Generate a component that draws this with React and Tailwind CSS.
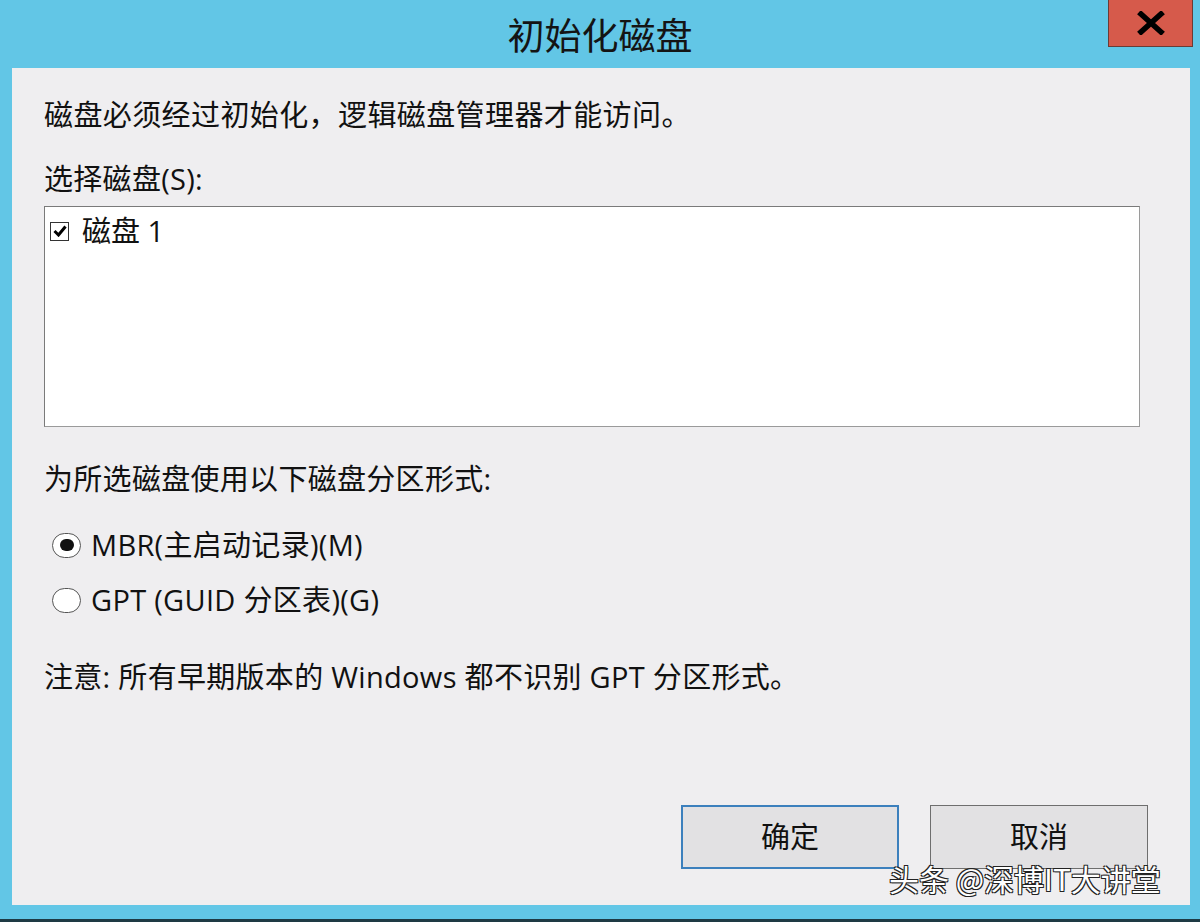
import React from "react";

const font = { fontFamily: '"Open Sans", "Noto Sans CJK SC", "Noto Sans", sans-serif' };

const Radio = ({ checked, label }) => (
  <div className="flex items-center h-[40px]">
    <span className="w-[29px] h-[25px] ml-[8px] rounded-full border border-[#555] bg-white flex items-center justify-center">
      {checked && <span className="w-[14px] h-[12px] rounded-full bg-[#111]" />}
    </span>
    <span className="ml-[10px] text-[29px] tracking-[0.3px] text-[#111]">{label}</span>
  </div>
);

const App = () => {
  return (
    <div className="w-[1200px] h-[922px] bg-[#62c6e6] flex flex-col overflow-hidden" style={font}>
      {/* title bar */}
      <div className="relative h-[68px] flex items-center justify-center shrink-0">
        <span className="text-[37px] text-[#141414] leading-none" style={{ fontFamily: '"Noto Sans CJK SC", sans-serif' }}>初始化磁盘</span>
        <button className="absolute right-[7px] top-0 w-[85px] h-[47px] bg-[#d65a4b] border border-[#6b3b35] border-t-0 flex items-center justify-center">
          <svg width="28" height="24" viewBox="0 0 28 24">
            <path d="M4 3 L24 21 M24 3 L4 21" stroke="#000" strokeWidth="5.5" strokeLinecap="square" />
          </svg>
        </button>
      </div>

      {/* body */}
      <div className="relative ml-[12px] mr-[10px] h-[837px] bg-[#efeef0] flex flex-col pl-[32px] pr-[50px] pt-[29px] shrink-0 text-[#111]">
        <p className="text-[29px] leading-[36px] tracking-[0.4px]">磁盘必须经过初始化，逻辑磁盘管理器才能访问。</p>
        <p className="mt-[28px] text-[29px] leading-[36px] tracking-[0.3px]">选择磁盘(S):</p>

        <div className="mt-[9px] h-[221px] bg-white border border-[#7a7a7a] border-r-[#9a9a9a] border-b-[#9a9a9a] pt-[12px] pl-[5px]">
          <div className="flex items-center h-[24px]">
            <span className="w-[19px] h-[19px] border border-[#333] bg-white flex items-center justify-center">
              <svg width="14" height="12" viewBox="0 0 14 12">
                <path d="M1.5 6 L5.5 10 L12.5 1.5" fill="none" stroke="#000" strokeWidth="3" />
              </svg>
            </span>
            <span className="ml-[13px] text-[29px] leading-[36px]">磁盘 1</span>
          </div>
        </div>

        <p className="mt-[34px] text-[29px] leading-[36px] tracking-[0.3px]">为所选磁盘使用以下磁盘分区形式:</p>

        <div className="mt-[28px] flex flex-col gap-[15px]">
          <Radio checked label="MBR(主启动记录)(M)" />
          <Radio label="GPT (GUID 分区表)(G)" />
        </div>

        <p className="mt-[39px] text-[29px] leading-[36px] tracking-[0.3px]">
          注意: 所有早期版本的 Windows 都不识别 GPT 分区形式。
        </p>

        <div className="mt-[110px] -mr-[8px] flex justify-end gap-[31px]">
          <button className="w-[218px] h-[64px] bg-[#e2e1e3] border-2 border-[#3c80bd] text-[29px] text-[#111]">确定</button>
          <button className="w-[218px] h-[64px] bg-[#e2e1e3] border border-[#6e6e6e] text-[29px] text-[#111]">取消</button>
        </div>

        <div
          className="absolute left-[877px] top-[795px] text-[30px] text-white leading-none"
          style={{
            fontFamily: '"Noto Sans CJK SC", sans-serif',
            textShadow: "1px 1px 0 #222, -1px -1px 0 #222, 1px -1px 0 #222, -1px 1px 0 #222",
          }}
        >
          头条 @深博IT大讲堂
        </div>
      </div>

      <div className="h-[14px] shrink-0" />
      <div className="flex-1 bg-[#1e3a44]" />
    </div>
  );
};

export default App;
